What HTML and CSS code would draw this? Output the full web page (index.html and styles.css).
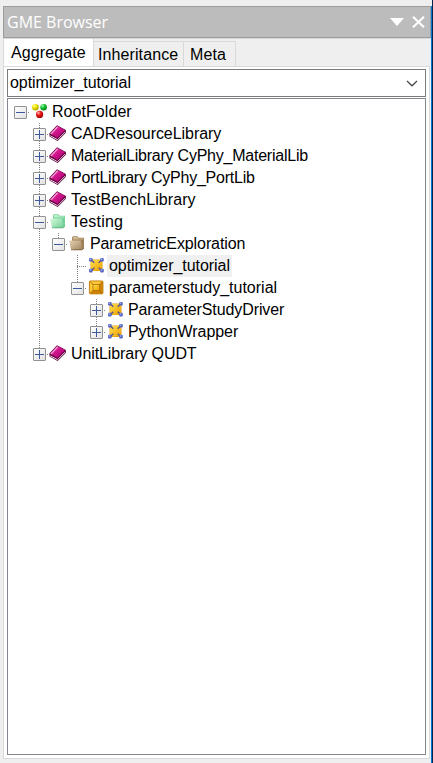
FILE: index.html
```html
<!DOCTYPE html>
<html lang="en">
<head>
<meta charset="utf-8">
<title>GME Browser</title>
<link rel="stylesheet" href="styles.css">
</head>
<body>
<svg class="defs" width="0" height="0" aria-hidden="true">
  <defs>
    <radialGradient id="yel" cx=".35" cy=".3" r=".75"><stop offset="0" stop-color="#fffcb0"/><stop offset=".4" stop-color="#f4e800"/><stop offset="1" stop-color="#a39a00"/></radialGradient>
    <radialGradient id="grn" cx=".35" cy=".3" r=".75"><stop offset="0" stop-color="#b6ffc0"/><stop offset=".4" stop-color="#18c838"/><stop offset="1" stop-color="#007a18"/></radialGradient>
    <radialGradient id="red" cx=".35" cy=".3" r=".75"><stop offset="0" stop-color="#ffc0b8"/><stop offset=".4" stop-color="#ee1c1c"/><stop offset="1" stop-color="#980000"/></radialGradient>
    <linearGradient id="mag" x1="0" y1="0" x2="1" y2="1"><stop offset="0" stop-color="#ee5cb8"/><stop offset=".45" stop-color="#d0148c"/><stop offset="1" stop-color="#a80070"/></linearGradient>
    <linearGradient id="gold" x1="0" y1="0" x2="1" y2="1"><stop offset="0" stop-color="#ffe050"/><stop offset="1" stop-color="#eca000"/></linearGradient>
    <linearGradient id="gf" x1="0" y1="0" x2="1" y2="1"><stop offset="0" stop-color="#d4fadc"/><stop offset="1" stop-color="#74d096"/></linearGradient>
    <linearGradient id="bf" x1="0" y1="0" x2="1" y2="1"><stop offset="0" stop-color="#e4d2b4"/><stop offset="1" stop-color="#a48660"/></linearGradient>
    <symbol id="root" viewBox="0 0 17 18">
      <circle cx="5.4" cy="4.2" r="3.3" fill="url(#yel)"/><circle cx="13.6" cy="4.2" r="3.3" fill="url(#grn)"/><circle cx="9.6" cy="11.4" r="3.6" fill="url(#red)"/>
    </symbol>
    <symbol id="book" viewBox="0 0 17 18">
      <path d="M.3 8.6 8 .3l8.9 4.6v2.8L8.6 16 .6 11.6z" fill="#5a0038"/>
      <path d="m1.3 10.8 7.2 3.9 7.6-7.6" fill="none" stroke="#e9cfe0" stroke-width="1"/>
      <path d="M1 8.6 8.1.9l8 4.2-7.7 8z" fill="url(#mag)"/>
      <path d="M1.4 8.7 8.1 1.4l1.2.6-6.7 7.3z" fill="#f7a0d4"/>
    </symbol>
    <symbol id="folder-green" viewBox="0 0 17 18">
      <path d="M4 5.5V2.5L5 1.3h4.4l1.2 1.5H16v10.4l-2 1.6H6z" fill="#78d09a"/>
      <path d="M4.8 4.6V2.8l.6-.7H9l1.2 1.5h5v1z" fill="#b8f0c8"/>
      <path d="M1.2 5.6h11.6l1.2 9.2H3z" fill="url(#gf)"/>
      <path d="M3 14.8h11l2-1.6" fill="none" stroke="#50ac74" stroke-width=".8"/>
    </symbol>
    <symbol id="folder-brown" viewBox="0 0 17 18">
      <path d="M4 5.5V2.5L5 1.3h4.4l1.2 1.5H16v10.4l-2 1.6H6z" fill="#a08058"/>
      <path d="M4.8 4.6V2.8l.6-.7H9l1.2 1.5h5v1z" fill="#d0b890"/>
      <path d="M1.2 5.6h11.6l1.2 9.2H3z" fill="url(#bf)"/>
      <path d="M3 14.8h11l2-1.6" fill="none" stroke="#745838" stroke-width=".8"/>
    </symbol>
    <symbol id="model" viewBox="0 0 17 18">
      <path d="M3.5 2.5h12v11.5h-12z" fill="#dc9a10"/>
      <path d="M6 3h7l2 2v6.5l-2 2H6l-2-2V5z" fill="url(#gold)"/>
      <path d="m4.5 3 2.8 2.8M14.5 3l-2.8 2.8M4.5 13.5l2.8-2.8m7.2 2.8-2.8-2.8" stroke="#50508c" stroke-width="1.3"/>
      <g fill="#5464c4"><rect x="2" y="1" width="3.6" height="3.6" rx="1"/><rect x="13.2" y="1" width="3.6" height="3.6" rx="1"/><rect x="2" y="11.8" width="3.6" height="3.6" rx="1"/><rect x="13.2" y="11.8" width="3.6" height="3.6" rx="1"/></g>
      <path d="M2.6 1.5h1.6v1.5H2.6zm11.2 0h1.6v1.5h-1.6zM2.6 12.2h1.6v1.5H2.6zm11.2 0h1.6v1.5h-1.6z" fill="#9ca8f0"/>
    </symbol>
    <symbol id="frame" viewBox="0 0 17 18">
      <rect x="2.4" y="1.9" width="13.6" height="13" rx="1.2" fill="#e49a10" stroke="#b87400" stroke-width=".8"/>
      <path d="M3 2.5h12.4l-3 3H6v6l-3 3z" fill="#fcc838"/>
      <path d="m15.4 2.5-3 3v6H6l-3 3h12.4z" fill="#cc8206"/>
      <path d="m3 2.5 3 3m9.4-3-3 3m-9.4 9 3-3m9.4 3-3-3" stroke="#9b5e00" stroke-width=".7"/>
      <rect x="6" y="5.5" width="6.4" height="6" fill="url(#gold)" stroke="#b07000" stroke-width=".8"/>
    </symbol>
  </defs>
</svg>
<div class="window">
  <div class="dock">
    <header class="titlebar">
      <span class="title">GME Browser</span>
      <svg class="menu" width="14" height="8" viewBox="0 0 14 8"><path d="M0 0h14L7 8z" fill="#fff"/></svg>
      <svg class="close" width="13" height="12" viewBox="0 0 13 12"><path d="m1 .8 11 10.4M12 .8 1 11.2" stroke="#fff" stroke-width="2.2"/></svg>
    </header>
    <nav class="tabs">
      <span class="tab active">Aggregate</span><span class="tab inherit">Inheritance</span><span class="tab meta">Meta</span>
    </nav>
    <main class="panel">
      <div class="combo"><span class="value">optimizer_tutorial</span>
        <svg width="12" height="7" viewBox="0 0 12 7"><path d="m1 1 5 4.8L11 1" fill="none" stroke="#444" stroke-width="1.2"/></svg>
      </div>
      <div class="tree">
        <div class="row"><i class="exp minus"></i><i class="dash"></i><svg class="icon"><use href="#root"/></svg><span class="label wide">RootFolder</span></div>
        <div class="row"><i class="gap"></i><i class="exp plus up down"></i><i class="dash"></i><svg class="icon"><use href="#book"/></svg><span class="label snug">CADResourceLibrary</span></div>
        <div class="row"><i class="gap"></i><i class="exp plus up down"></i><i class="dash"></i><svg class="icon"><use href="#book"/></svg><span class="label tight">MaterialLibrary CyPhy_MaterialLib</span></div>
        <div class="row"><i class="gap"></i><i class="exp plus up down"></i><i class="dash"></i><svg class="icon"><use href="#book"/></svg><span class="label tight">PortLibrary CyPhy_PortLib</span></div>
        <div class="row"><i class="gap"></i><i class="exp plus up down"></i><i class="dash"></i><svg class="icon"><use href="#book"/></svg><span class="label wide">TestBenchLibrary</span></div>
        <div class="row"><i class="gap"></i><i class="exp minus up down"></i><i class="dash"></i><svg class="icon"><use href="#folder-green"/></svg><span class="label testing">Testing</span></div>
        <div class="row"><i class="gap"></i><i class="gap line"></i><i class="exp minus up"></i><i class="dash"></i><svg class="icon"><use href="#folder-brown"/></svg><span class="label close-set">ParametricExploration</span></div>
        <div class="row"><i class="gap"></i><i class="gap line"></i><i class="gap"></i><i class="exp leaf"></i><i class="dash"></i><svg class="icon"><use href="#model"/></svg><span class="label snug selected">optimizer_tutorial</span></div>
        <div class="row"><i class="gap"></i><i class="gap line"></i><i class="gap"></i><i class="exp minus up"></i><i class="dash"></i><svg class="icon"><use href="#frame"/></svg><span class="label">parameterstudy_tutorial</span></div>
        <div class="row"><i class="gap"></i><i class="gap line"></i><i class="gap"></i><i class="gap"></i><i class="exp plus up down"></i><i class="dash"></i><svg class="icon"><use href="#model"/></svg><span class="label close-set">ParameterStudyDriver</span></div>
        <div class="row"><i class="gap"></i><i class="gap line"></i><i class="gap"></i><i class="gap"></i><i class="exp plus up"></i><i class="dash"></i><svg class="icon"><use href="#model"/></svg><span class="label snug">PythonWrapper</span></div>
        <div class="row"><i class="gap"></i><i class="exp plus up"></i><i class="dash"></i><svg class="icon"><use href="#book"/></svg><span class="label close-set">UnitLibrary QUDT</span></div>
      </div>
    </main>
  </div>
</div>
</body>
</html>
```
FILE: styles.css
```css
*, *::before { box-sizing: border-box; }
body {
  margin: 0;
  background: #efefef;
  font: 16px/22px "Liberation Sans", Arial, sans-serif;
  color: #000;
}
.defs { display: block; height: 0; }
.window {
  height: 763px;
  padding: 6px 0 0 3px;
  border-right: 1px solid #06264d;
  overflow: hidden;
}
.dock {
  height: 757px;
  display: flex;
  flex-direction: column;
  padding-bottom: 4px;
  border-right: 1px solid #0078d7;
}
.titlebar {
  flex: none;
  height: 32px;
  display: flex;
  align-items: center;
  padding: 0 5px 0 3px;
  background: #bcbcbc;
  border: 1px solid #9d9d9d;
}
.title {
  flex: 1;
  color: #fff;
  font: 16px/30px "Open Sans", "Noto Sans", sans-serif;
}
.menu { margin-right: 8px; }
.tabs {
  flex: none;
  height: 28px;
  display: flex;
  align-items: flex-end;
  border-top: 1px solid #d9d9d9;
}
.tab {
  height: 25px;
  line-height: 26px;
  border-top: 1px solid #d9d9d9;
  border-right: 1px solid #d9d9d9;
}
.active {
  width: 91px;
  height: 27px;
  line-height: 27px;
  padding-left: 7px;
  letter-spacing: 0.1px;
  background: #fff;
  border-left: 1px solid #d9d9d9;
  border-top: 0;
}
.inherit { width: 90px; padding-left: 4px; letter-spacing: 0.1px; }
.meta { width: 52px; padding-left: 6px; letter-spacing: 0.15px; }
.panel {
  flex: 1;
  display: flex;
  flex-direction: column;
  gap: 1px;
  margin-right: 1px;
  padding: 2px 3px 3px;
  background: #fff;
  border: 1px solid #d9d9d9;
}
.combo {
  flex: none;
  height: 28px;
  display: flex;
  align-items: center;
  justify-content: space-between;
  padding: 0 7px 0 2px;
  border: 1px solid #7a7a7a;
}
.value { letter-spacing: -0.05px; }
.tree {
  flex: 1;
  padding: 2px 0 0 6px;
  border: 1px solid #828790;
}
.row { height: 22px; display: flex; align-items: center; }
.gap { width: 19px; height: 22px; }
.line, .exp {
  --dots: repeating-linear-gradient(#808080 0 1px, transparent 1px 2px);
  background: var(--dots) 6px 0 / 1px 22px no-repeat;
}
.exp { width: 13px; height: 22px; padding-bottom: 1px; display: grid; align-items: center; background-size: 1px 0; }
.up { background-size: 1px 11px; }
.down { background-size: 1px 22px; }
.leaf {
  background: var(--dots) 6px 0 / 1px 22px no-repeat,
    repeating-linear-gradient(90deg, #808080 0 1px, transparent 1px 2px) 6px 11px / 7px 1px no-repeat;
}
.plus::before, .minus::before {
  content: "";
  width: 13px;
  height: 13px;
  margin-top: 2px;
  border: 1px solid #919191;
  border-radius: 1px;
  background: linear-gradient(#3f5a9c, #3f5a9c) center / 9px 1px no-repeat,
    linear-gradient(135deg, #fff, #e2e2e2);
}
.plus::before {
  background: linear-gradient(#3f5a9c, #3f5a9c) center / 9px 1px no-repeat,
    linear-gradient(#3f5a9c, #3f5a9c) center / 1px 9px no-repeat,
    linear-gradient(135deg, #fff, #e2e2e2);
}
.dash {
  width: 3px;
  height: 1px;
  background: repeating-linear-gradient(90deg, transparent 0 1px, #808080 1px 2px);
}
.icon { width: 17px; height: 18px; flex: none; }
.label { height: 22px; margin-left: 3px; padding: 0 2px; white-space: nowrap; }
.wide { letter-spacing: 0.06px; }
.testing { letter-spacing: 0.2px; }
.snug { letter-spacing: -0.05px; }
.close-set { letter-spacing: -0.1px; }
.tight { letter-spacing: -0.23px; }
.selected { background: #f0f0f0; }
```
